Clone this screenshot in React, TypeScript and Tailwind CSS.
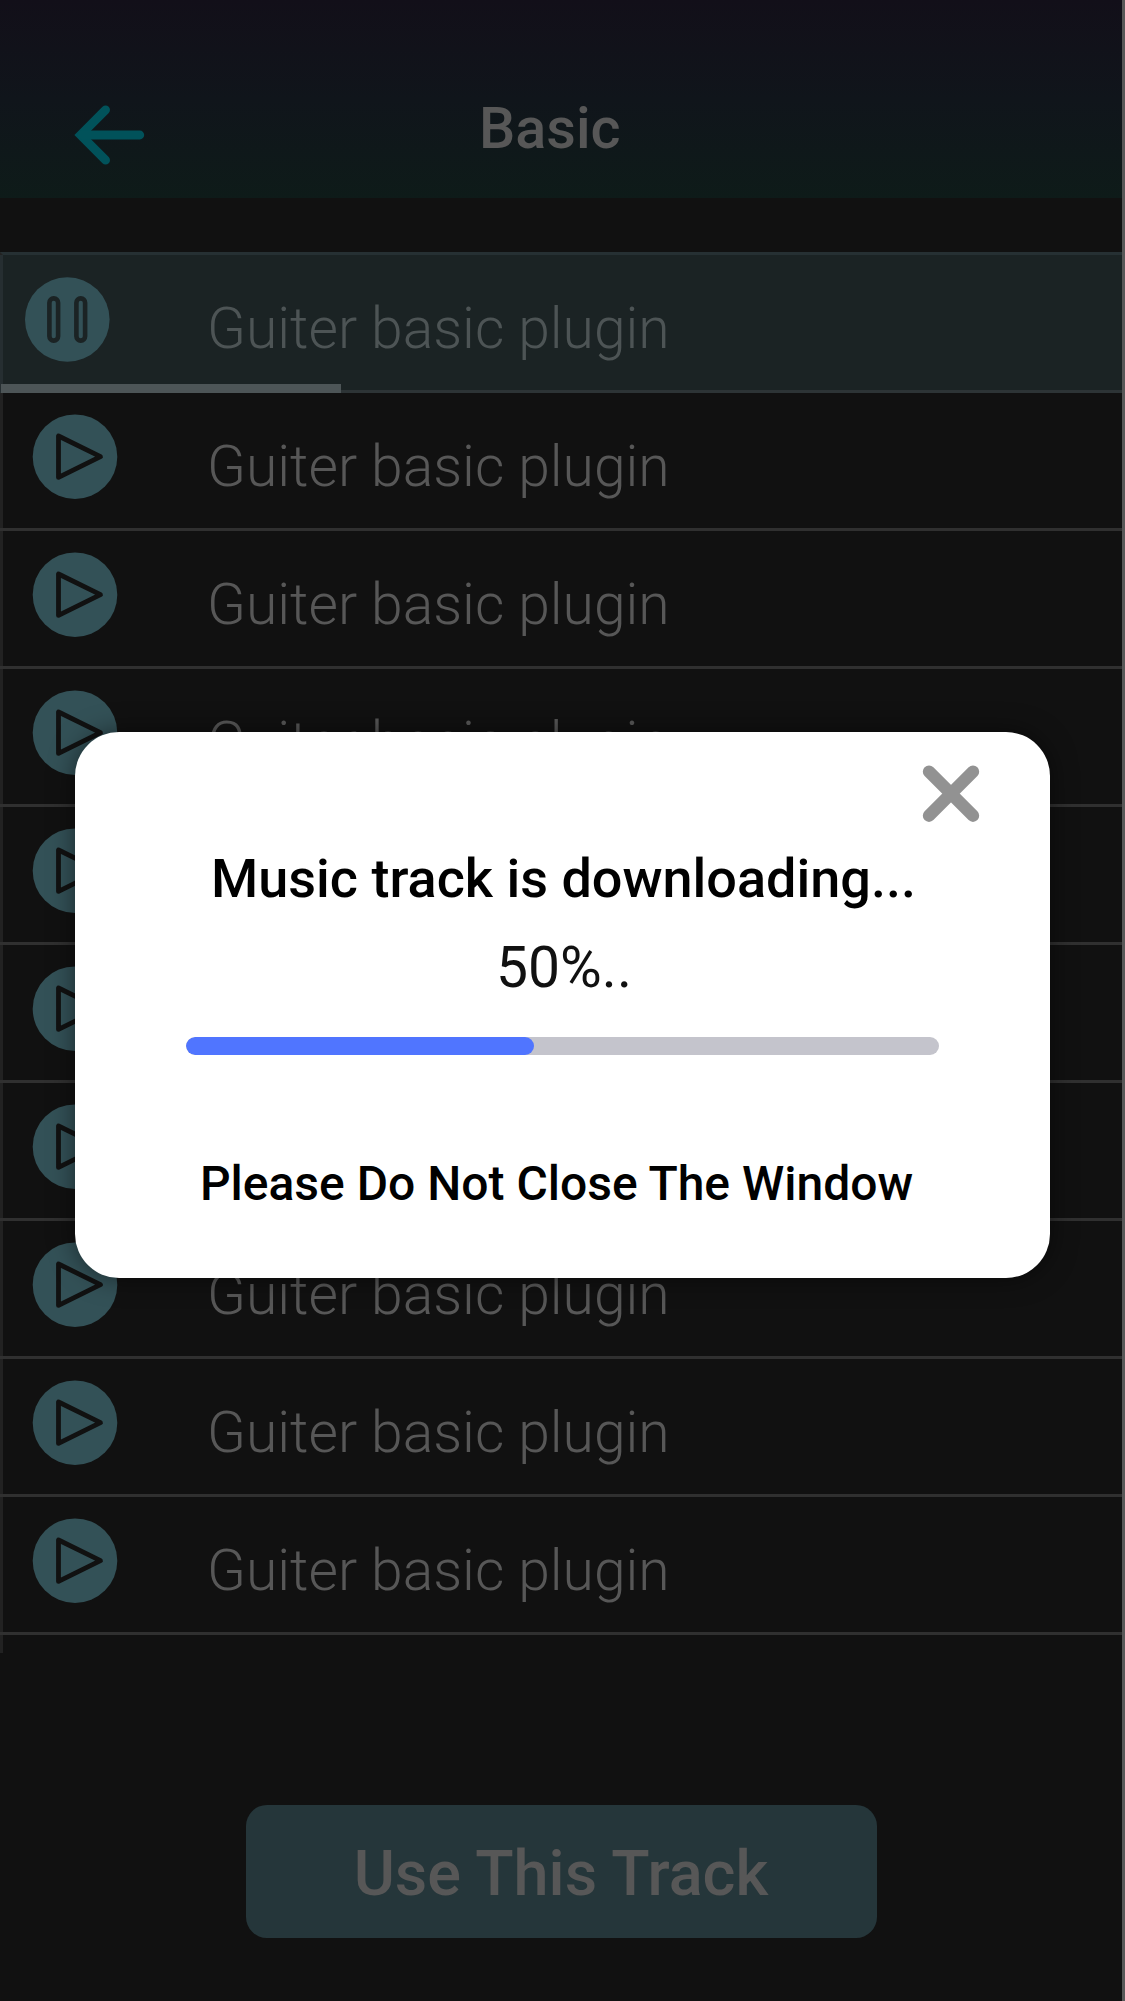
const TRACKS = Array.from({ length: 10 }, (_, id) => ({ id, title: "Guiter basic plugin", playing: id === 0 }));

function BackArrow() {
  return (
    <svg className="block h-[60px] w-[72px]" viewBox="0 0 72 60" fill="none" stroke="#01525a" strokeWidth="8.8" strokeLinecap="round">
      <path d="M31.6 4.8 6.6 30l25 25.2" strokeLinejoin="miter" />
      <path d="M8 30h57.8" />
    </svg>
  );
}

function PauseIcon() {
  return (
    <svg className="block size-[86px] shrink-0" viewBox="0 0 86 86">
      <circle cx="43.3" cy="43.5" r="42.3" fill="#335157" />
      <g fill="none" stroke="#1b2324" strokeWidth="4.6">
        <rect x="25.4" y="22.4" width="8.7" height="42.2" rx="4.3" />
        <rect x="52.4" y="22.4" width="8.7" height="42.2" rx="4.3" />
      </g>
    </svg>
  );
}

function PlayIcon() {
  return (
    <svg className="block size-[86px] shrink-0" viewBox="0 0 86 86">
      <circle cx="43" cy="42.7" r="42.3" fill="#335157" />
      <path d="M26.5 22v41.4L68.5 42.7z" fill="none" stroke="#111" strokeWidth="4.8" strokeLinejoin="round" />
    </svg>
  );
}

function TrackRow({ title, playing }: { title: string; playing: boolean }) {
  return (
    <li
      className={
        playing
          ? "relative -ml-[3px] flex h-[138px] items-start border-b-[3px] border-l-[3px] border-b-[#2d3436] border-l-[#262e31] bg-[#1b2324]"
          : "relative -ml-[3px] flex h-[138px] items-start border-b-[3px] border-[#303030] pl-[3px]"
      }
    >
      <div className={playing ? "w-[204px] pl-[21px] pt-[21px]" : "w-[204px] pl-[29px] pt-[21px]"}>
        {playing ? <PauseIcon /> : <PlayIcon />}
      </div>
      <span
        className={
          playing
            ? "pt-[44px] text-[57px] font-light leading-[60px] text-[#4d5455]"
            : "pt-[44px] text-[57px] font-light leading-[60px] text-[#575757]"
        }
      >
        {title}
      </span>
      {playing && <div className="absolute -bottom-[3px] -left-[2px] h-[9px] w-[340px] bg-[#4d5557]" />}
    </li>
  );
}

function DownloadDialog() {
  return (
    <div
      role="dialog"
      className="absolute left-[75px] top-[732px] flex h-[546px] w-[975px] flex-col items-center rounded-[44px] bg-white shadow-[0_0_26px_rgba(0,0,0,0.5)]"
    >
      <button aria-label="Close" className="mr-[70px] mt-[33px] self-end">
        <svg className="block size-[58px]" viewBox="0 0 58 58" fill="none" stroke="#929292" strokeWidth="12.4" strokeLinecap="round">
          <path d="M7 6.7l44 44M51 6.7L7 50.7" />
        </svg>
      </button>
      <h2 className="ml-[2px] mt-[26px] text-[54px] font-medium leading-[60px] text-black">Music track is downloading...</h2>
      <p className="ml-[3px] mt-[29px] text-[57px] leading-[60px] text-[#111]">50%..</p>
      <div className="mt-[39px] h-[18px] w-[753px] overflow-hidden rounded-[9px] bg-[#c4c4cc]">
        <div className="h-full w-[348px] rounded-[9px] bg-[#5075ff]" />
      </div>
      <p className="-ml-[12px] mt-[99px] text-[48px] font-medium leading-[60px] text-black">Please Do Not Close The Window</p>
    </div>
  );
}

export default function App() {
  return (
    <div className="relative flex h-[2001px] w-[1125px] flex-col overflow-hidden bg-[#111] font-['Roboto',sans-serif]">
      <header className="flex h-[198px] shrink-0 bg-linear-to-b from-[#120f19] via-[#10151b] to-[#0e1b19]">
        <button aria-label="Back" className="ml-[74px] mt-[105px] h-[60px]">
          <BackArrow />
        </button>
        <h1 className="ml-[333px] mt-[99px] text-[57.5px] font-medium leading-[60px] text-[#575757]">Basic</h1>
      </header>
      <ul className="mt-[54px] h-[1401px] shrink-0 border-l-[3px] border-t-[3px] border-l-[#222] border-t-[#263033]">
        {TRACKS.map((track) => (
          <TrackRow key={track.id} title={track.title} playing={track.playing} />
        ))}
      </ul>
      <button className="ml-[246px] mt-[152px] h-[133px] w-[631px] shrink-0 rounded-[21px] bg-[#25363a] pr-[1px] pt-[4px] text-[63px] font-medium leading-[60px] text-[#575757]">
        Use This Track
      </button>
      <div className="absolute right-0 top-0 h-full w-[3px] bg-[#585858]" />
      <DownloadDialog />
    </div>
  );
}
